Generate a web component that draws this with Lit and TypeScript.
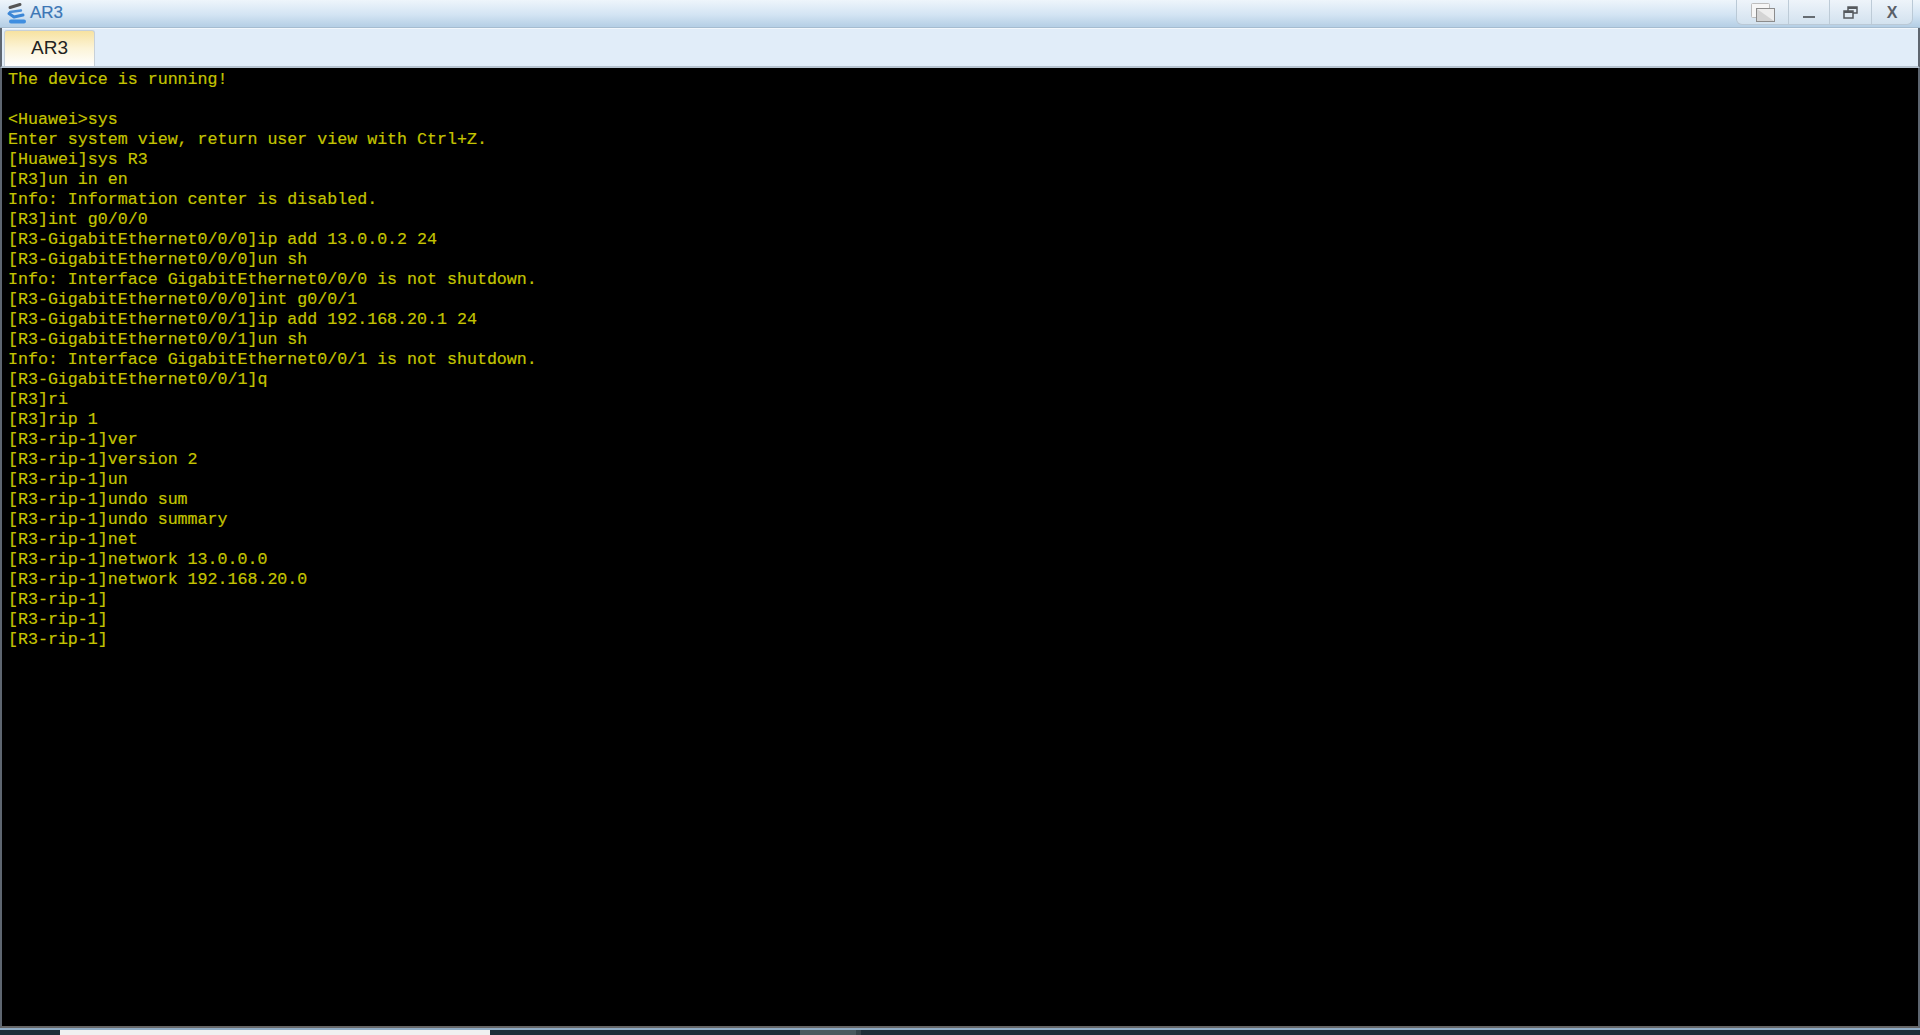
import { LitElement, html, css } from "lit";
import { customElement } from "lit/decorators.js";

const LINES = [
  "The device is running!",
  "",
  "<Huawei>sys",
  "Enter system view, return user view with Ctrl+Z.",
  "[Huawei]sys R3",
  "[R3]un in en",
  "Info: Information center is disabled.",
  "[R3]int g0/0/0",
  "[R3-GigabitEthernet0/0/0]ip add 13.0.0.2 24",
  "[R3-GigabitEthernet0/0/0]un sh",
  "Info: Interface GigabitEthernet0/0/0 is not shutdown.",
  "[R3-GigabitEthernet0/0/0]int g0/0/1",
  "[R3-GigabitEthernet0/0/1]ip add 192.168.20.1 24",
  "[R3-GigabitEthernet0/0/1]un sh",
  "Info: Interface GigabitEthernet0/0/1 is not shutdown.",
  "[R3-GigabitEthernet0/0/1]q",
  "[R3]ri",
  "[R3]rip 1",
  "[R3-rip-1]ver",
  "[R3-rip-1]version 2",
  "[R3-rip-1]un",
  "[R3-rip-1]undo sum",
  "[R3-rip-1]undo summary",
  "[R3-rip-1]net",
  "[R3-rip-1]network 13.0.0.0",
  "[R3-rip-1]network 192.168.20.0",
  "[R3-rip-1]",
  "[R3-rip-1]",
  "[R3-rip-1]",
];

@customElement("app-root")
export class AppRoot extends LitElement {
  static styles = css`
    :host { display: flex; flex-direction: column; width: 1920px; height: 1035px; overflow: hidden; background: #8fabc4; font-family: "Liberation Sans", Arial, sans-serif; }
    .title { height: 28px; flex: none; display: flex; align-items: flex-start; justify-content: space-between; background: linear-gradient(180deg, #eef5fb 0%, #d3e4f3 55%, #b7d0e6 96%); box-sizing: border-box; border-bottom: 1px solid #a5bcd0; }
    .brand { display: flex; align-items: center; gap: 4px; padding-left: 6px; height: 26px; color: #3c76b4; font-size: 17px; -webkit-text-stroke: 0.2px #3c76b4; }
    .brand svg { display: block; }
    .controls { display: flex; height: 25px; margin-right: 7px; border: 1px solid #bac9d6; border-top: 0; border-radius: 0 0 6px 6px; background: linear-gradient(180deg, #eef4fa, #d3e2ef); box-sizing: border-box; }
    .ctl { display: flex; align-items: center; justify-content: center; border-left: 1px solid #bdcbd7; box-sizing: border-box; color: #555; }
    .ctl:first-child { border-left: 0; }
    .c1 { width: 51px; } .c2 { width: 41px; } .c3 { width: 42px; } .c4 { width: 41px; padding-top: 2px; font-weight: 700; font-size: 16px; color: #5a6068; }
    .tabs { height: 40px; flex: none; display: flex; align-items: flex-end; background: #e1edf9; padding-left: 2px; border-left: 2px solid #5e6670; border-right: 2px solid #5e6670; box-sizing: border-box; border-bottom: 2px solid #b6c3d0; box-shadow: inset 0 1px 0 #f2f7fc; }
    .tab { width: 91px; height: 36px; padding-bottom: 2px; box-sizing: border-box; display: flex; align-items: center; justify-content: center; font-size: 19px; color: #222; border: 1px solid #c7d0d8; border-bottom: 0; border-radius: 3px 3px 0 0; background: linear-gradient(180deg, #f7e2a0 0%, #fcf4d8 50%, #fff 100%); }
    .term { flex: 1; background: #000; color: #c4c400; margin: 0; padding: 2px 0 0 6px; box-sizing: border-box; border: 2px solid #5e6670; border-top: 0; border-bottom-color: #666; font: 16.64px/20px "Liberation Mono", "Courier New", monospace; white-space: pre; overflow: hidden; -webkit-text-stroke: 0.2px #c4c400; }
    .line { height: 20px; }
    .gap { height: 2px; flex: none; background: #8fabc4; }
    .strip { height: 5px; flex: none; display: flex; background: #1e2f36; }
    .s1 { width: 60px; } .s2 { width: 430px; background: #f0f0f0; } .s3 { width: 310px; } .s4 { width: 56px; background: #4a5a5e; } .s5 { width: 5px; background: #364449; }
  `;

  render() {
    return html`
      <div class="title">
        <div class="brand">
          <svg width="20" height="24" viewBox="0 0 20 24" fill="none">
            <path d="M4 6.5 L14 3.5" stroke="#555" stroke-width="3" stroke-linecap="round"/>
            <path d="M4 11 L15 9.5" stroke="#4d90d8" stroke-width="2.4" stroke-linecap="round"/>
            <path d="M3 12.5 L8 16 L17 14" stroke="#3b86d6" stroke-width="3" stroke-linecap="round" stroke-linejoin="round"/>
            <path d="M5 20.5 H18" stroke="#3f8ee0" stroke-width="4" stroke-linecap="round"/>
          </svg>
          <span>AR3</span>
        </div>
        <div class="controls">
          <div class="ctl c1">
            <svg width="26" height="20" viewBox="0 0 26 20">
              <rect x="1.5" y="1.5" width="18" height="14" rx="1" fill="#f6f6f6" stroke="#bdbdbd"/>
              <rect x="6.5" y="6.5" width="18" height="13" fill="#d4d4d4" stroke="#8c8c8c"/>
              <path d="M7 7 H24 V19 Z" fill="#eeeeee"/>
            </svg>
          </div>
          <div class="ctl c2">
            <svg width="14" height="14" viewBox="0 0 14 14"><rect x="1" y="11" width="12" height="2" fill="#666c72"/></svg>
          </div>
          <div class="ctl c3">
            <svg width="15" height="13" viewBox="0 0 15 13" fill="none" stroke="#55595e" stroke-width="1.5">
              <rect x="5" y="1" width="9" height="6"/><rect x="1" y="5" width="9" height="7" fill="#dfe9f2"/><path d="M1 6 H10 M5 2 H14" stroke-width="2"/>
            </svg>
          </div>
          <div class="ctl c4">X</div>
        </div>
      </div>
      <div class="tabs"><div class="tab">AR3</div></div>
      <div class="term">${LINES.map((l) => html`<div class="line">${l}</div>`)}</div>
      <div class="gap"></div>
      <div class="strip"><div class="s1"></div><div class="s2"></div><div class="s3"></div><div class="s4"></div><div class="s5"></div></div>
    `;
  }
}
